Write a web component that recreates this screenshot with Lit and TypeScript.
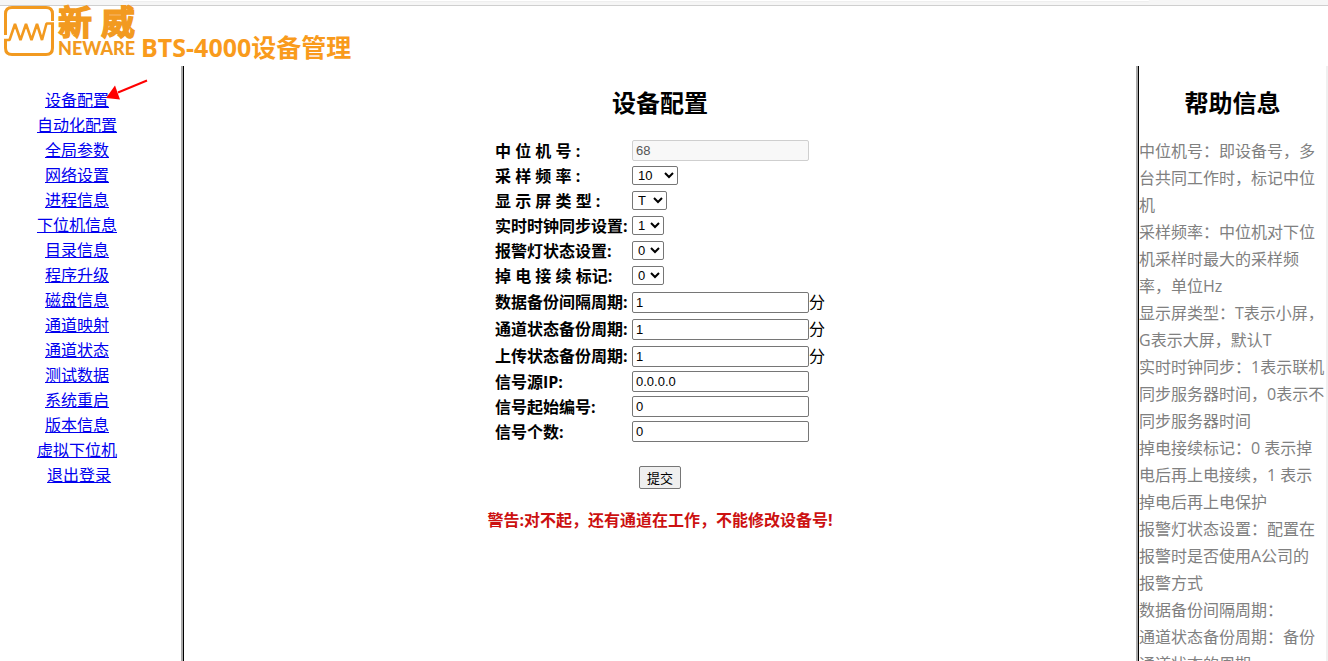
import { LitElement, html, css, svg } from "lit";
import { customElement, property } from "lit/decorators.js";

type Field = {
  id: string;
  label: string;
  value: string;
  kind: "text" | "select";
  disabled?: boolean;
  unit?: string;
  options?: string[];
};

const LINKS = [
  "设备配置", "自动化配置", "全局参数", "网络设置", "进程信息", "下位机信息",
  "目录信息", "程序升级", "磁盘信息", "通道映射", "通道状态", "测试数据",
  "系统重启", "版本信息", "虚拟下位机", "\u00a0退出登录",
];

const FIELDS: Field[] = [
  { id: "device", label: "中 位 机 号 :", value: "68", kind: "text", disabled: true },
  { id: "rate", label: "采 样 频 率 :", value: "10", kind: "select", options: ["10", "100"] },
  { id: "screen", label: "显 示 屏 类 型 :", value: "T", kind: "select", options: ["T", "G"] },
  { id: "clock", label: "实时时钟同步设置:", value: "1", kind: "select", options: ["1", "0"] },
  { id: "lamp", label: "报警灯状态设置:", value: "0", kind: "select", options: ["0", "1"] },
  { id: "resume", label: "掉 电 接 续 标记:", value: "0", kind: "select", options: ["0", "1"] },
  { id: "data-backup", label: "数据备份间隔周期:", value: "1", kind: "text", unit: "分" },
  { id: "channel-backup", label: "通道状态备份周期:", value: "1", kind: "text", unit: "分" },
  { id: "upload-backup", label: "上传状态备份周期:", value: "1", kind: "text", unit: "分" },
  { id: "ip", label: "信号源IP:", value: "0.0.0.0", kind: "text" },
  { id: "start", label: "信号起始编号:", value: "0", kind: "text" },
  { id: "count", label: "信号个数:", value: "0", kind: "text" },
];

const HELP = [
  "中位机号：即设备号，多台共同工作时，标记中位机",
  "采样频率：中位机对下位机采样时最大的采样频率，单位Hz",
  "显示屏类型：T表示小屏，G表示大屏，默认T",
  "实时时钟同步：1表示联机同步服务器时间，0表示不同步服务器时间",
  "掉电接续标记：0 表示掉电后再上电接续，1 表示掉电后再上电保护",
  "报警灯状态设置：配置在报警时是否使用A公司的报警方式",
  "数据备份间隔周期：",
  "通道状态备份周期：备份通道状态的周期",
];

@customElement("brand-header")
export class BrandHeader extends LitElement {
  static styles = css`
    :host { display: block; }
    .strip {
      box-sizing: border-box;
      height: 6px;
      background: #f6f6f6;
      border-bottom: 1px solid #cfcfcf;
      padding: 0 179px 0 123px;
    }
    .tab {
      height: 1px;
      background: #fff;
      border-radius: 0 0 4px 4px;
      box-shadow: 0 1px 1px #eeeeee;
    }
    .brand {
      display: flex;
      align-items: flex-start;
      gap: 5px;
      height: 60px;
      padding-left: 4px;
    }
    .logo { display: block; flex: none; overflow: visible; }
    .cn { font: bold 34px "Noto Sans CJK SC", sans-serif; }
    .en { font: 900 18px Lato, sans-serif; }
    .title {
      margin: 0;
      padding-top: 25px;
      font-size: 25px;
      line-height: 32px;
      font-weight: bold;
      color: #f99b1c;
    }
  `;
  render() {
    return html`
      <div class="strip"><div class="tab"></div></div>
      <header class="brand">
        <svg class="logo" width="132" height="54" viewBox="0 0 132 54" role="img" aria-label="新威 NEWARE">
          ${svg`
            <g fill="none" stroke="#f29a20" stroke-width="3">
              <path d="M1.5 29V8Q1.5 1.5 8 1.5H42Q48.5 1.5 48.5 8V15"/>
              <path d="M1.5 34V42Q1.5 48.5 8 48.5H42Q48.5 48.5 48.5 42V18"/>
              <path stroke-width="2.6" stroke-linejoin="bevel" d="M0 34H5.500L11 18L16.500 34L22 18L27.500 34L33 18L38 34L42.500 17.500H50"/>
            </g>
            <g fill="#f29a20">
              <text class="cn" y="29" stroke="#f29a20" stroke-width="1.4"><tspan x="54">新</tspan><tspan x="97">威</tspan></text>
              <text class="en" x="54" y="49">NEWARE</text>
            </g>`}
        </svg>
        <h1 class="title">BTS-4000设备管理</h1>
      </header>
    `;
  }
}

@customElement("side-nav")
export class SideNav extends LitElement {
  static styles = css`
    :host { display: block; padding: 22px 27px 0 0; }
    .list { list-style: none; margin: 0; padding: 0; text-align: center; }
    .item { line-height: 25px; white-space: pre; }
    .link { color: #0000ee; text-decoration: underline; }
    .anchor { position: relative; }
    .arrow { position: absolute; left: 100%; top: -10px; margin-left: -3px; pointer-events: none; }
  `;
  render() {
    return html`<nav><ul class="list">${LINKS.map((t, i) => {
      const name = t.trim();
      const lead = t.length > name.length ? "\u00a0" : "";
      return html`<li class="item">${lead}<span class="anchor"><a class="link" href="#p${i}">${name}</a>${i === 0
        ? html`<svg class="arrow" width="42" height="24" viewBox="0 0 42 24" aria-hidden="true">
            <path d="M12 13.5L41 1.5" stroke="#f00" stroke-width="2" fill="none"/>
            <path d="M0 19L9 6.500L14 20.500Z" fill="#f00"/>
          </svg>` : ""}</span></li>`;
    })}</ul></nav>`;
  }
}

@customElement("config-form")
export class ConfigForm extends LitElement {
  @property({ attribute: false }) fields: Field[] = FIELDS;
  static styles = css`
    :host { display: flex; flex-direction: column; align-items: center; padding-top: 21px; }
    .heading { margin: 0; font-size: 24px; line-height: 32px; }
    .form { display: flex; flex-direction: column; align-items: center; padding-top: 19px; }
    .row {
      display: grid;
      grid-template-columns: 137px 177px 16px;
      align-items: center;
      height: 25px;
    }
    .row.timed { padding-top: 2px; }
    .label { font-weight: bold; line-height: 22px; white-space: nowrap; }
    .timed .label, .unit { padding-bottom: 2px; }
    .text, .select, .submit { font-family: "Liberation Sans", "Noto Sans CJK SC", sans-serif; font-size: 13px; }
    .text {
      box-sizing: border-box;
      width: 100%;
      height: 21px;
      margin: 0;
      padding: 1px 3px;
      border: 1px solid #767676;
      border-radius: 2px;
      background: #fff;
      color: #000;
    }
    .text:disabled { background: #f8f8f8; border-color: #cfcfcf; color: #545454; }
    .select {
      justify-self: start;
      height: 19px;
      margin: 0;
      padding: 0 1px;
      border: 1px solid #767676;
      border-radius: 2px;
      background: #fff;
      color: #000;
    }
    .unit { line-height: 22px; }
    .submit {
      height: 23px;
      margin: 22px 0 0;
      padding: 0 7px;
      border: 1px solid #767676;
      border-radius: 2px;
      background: #efefef;
      color: #000;
    }
    .warning { margin: 19px 0 0; line-height: 24px; font-weight: bold; color: #cc1111; }
  `;
  private control(f: Field) {
    return f.kind === "select"
      ? html`<select class="select" id=${f.id}>${f.options!.map(
          (o) => html`<option ?selected=${o === f.value}>${o}</option>`)}</select>`
      : html`<input class="text" type="text" id=${f.id} .value=${f.value} ?disabled=${!!f.disabled}>`;
  }
  render() {
    return html`
      <h2 class="heading">设备配置</h2>
      <form class="form" @submit=${(e: Event) => e.preventDefault()}>
        ${this.fields.map((f) => html`
          <div class="row ${f.unit ? "timed" : ""}">
            <label class="label" for=${f.id}>${f.label}</label>
            ${this.control(f)}
            ${f.unit ? html`<span class="unit">${f.unit}</span>` : ""}
          </div>`)}
        <button class="submit" type="submit">提交</button>
      </form>
      <p class="warning">警告:对不起，还有通道在工作，不能修改设备号!</p>
    `;
  }
}

@customElement("help-panel")
export class HelpPanel extends LitElement {
  static styles = css`
    :host { display: block; padding-top: 21px; }
    .heading { margin: 0; font-size: 24px; line-height: 32px; text-align: center; }
    .body { padding: 19px 1px 0 0; color: #808080; }
    .entry { margin: 0; line-height: 27px; }
  `;
  render() {
    return html`
      <h2 class="heading">帮助信息</h2>
      <div class="body">${HELP.map((t) => html`<p class="entry">${t}</p>`)}</div>
    `;
  }
}

@customElement("app-root")
export class AppRoot extends LitElement {
  static styles = css`
    :host {
      display: flex;
      flex-direction: column;
      height: 100vh;
      overflow: hidden;
      background: #fff;
      color: #000;
      font-family: "Open Sans", "Noto Sans CJK SC", sans-serif;
      font-size: 16px;
    }
    .columns {
      flex: 1;
      min-height: 0;
      display: grid;
      grid-template-columns: 181px 3px minmax(0, 1fr) 3px 187px;
      border-right: 2px solid #f0f0f0;
    }
    .divider { box-sizing: border-box; background: #a9a9a9; border-right: 1px solid #000; }
    .pane { min-height: 0; overflow: hidden; }
  `;
  render() {
    return html`
      <brand-header></brand-header>
      <div class="columns">
        <side-nav class="pane"></side-nav>
        <div class="divider"></div>
        <config-form class="pane"></config-form>
        <div class="divider"></div>
        <help-panel class="pane"></help-panel>
      </div>
    `;
  }
}
